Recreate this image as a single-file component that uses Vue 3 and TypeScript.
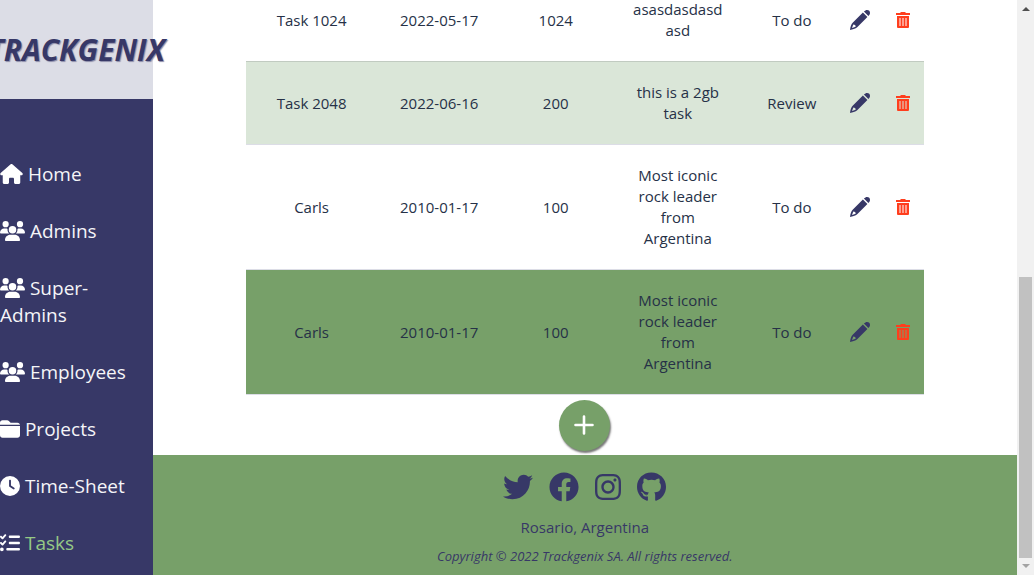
<script setup lang="ts">
interface NavItem {
  label: string
  icon: string
  active?: boolean
}

interface Task {
  name: string
  date: string
  hours: number
  description: string
  status: string
  tone: string
}

interface Glyph {
  box: string
  width: number
  path: string
}

const glyphs: Record<string, Glyph> = {
  house: {
    box: '0 0 576 512',
    width: 23,
    path: 'M575.8 255.5c0 18-15 32.1-32 32.1h-32l.7 160.2c0 2.7-.2 5.4-.5 8.1V472c0 22.1-17.9 40-40 40H392c-22.1 0-40-17.9-40-40v-88c0-17.7-14.3-32-32-32h-64c-17.7 0-32 14.3-32 32v88c0 22.1-17.9 40-40 40h-80c-22.1 0-40-17.9-40-40V287.6H32c-18 0-32-14-32-32.1 0-9 3-17 10-24L266.4 8c7-7 15-8 22-8s15 2 21 7l255.5 224.5c8 7 12 15 11 24z',
  },
  users: {
    box: '0 0 640 512',
    width: 25,
    path: 'M144 0a80 80 0 1 1 0 160A80 80 0 1 1 144 0zM512 0a80 80 0 1 1 0 160A80 80 0 1 1 512 0zM0 298.7C0 239.8 47.8 192 106.7 192h42.7c15.9 0 31 3.5 44.6 9.7-1.3 7.2-1.9 14.7-1.9 22.3 0 38.2 16.8 72.5 43.3 96H21.3C9.6 320 0 310.4 0 298.7zM405.3 320c26-23.5 42.6-57.8 42.6-96 0-7.6-.7-15-1.9-22.3 13.6-6.3 28.7-9.7 44.6-9.7h42.7C592.2 192 640 239.8 640 298.7c0 11.8-9.6 21.3-21.3 21.3H405.3zM224 224a96 96 0 1 1 192 0 96 96 0 1 1-192 0zM128 485.3C128 411.7 187.7 352 261.3 352h117.4C452.3 352 512 411.7 512 485.3c0 14.7-11.9 26.7-26.7 26.7H154.7c-14.7 0-26.7-11.9-26.7-26.7z',
  },
  folder: {
    box: '0 0 512 512',
    width: 20,
    path: 'M0 128V96c0-35.3 28.7-64 64-64h117.5c17 0 33.3 6.7 45.3 18.7L272 96h176c35.3 0 64 28.7 64 64v-16H0zM0 176h512v240c0 35.3-28.7 64-64 64H64c-35.3 0-64-28.7-64-64z',
  },
  clock: {
    box: '0 0 512 512',
    width: 20,
    path: 'M256 0a256 256 0 1 1 0 512A256 256 0 1 1 256 0zM232 120v136c0 8 4 15.5 10.7 20l96 64c11 7.4 25.9 4.4 33.3-6.7s4.4-25.9-6.7-33.3L280 243.2V120c0-13.3-10.7-24-24-24s-24 10.7-24 24z',
  },
  tasks: {
    box: '0 0 512 512',
    width: 20,
    path: 'M152.1 38.2c9.9 8.9 10.7 24 1.8 33.9l-72 80c-4.4 4.9-10.6 7.8-17.2 7.9s-12.9-2.4-17.6-7L7 113c-9.3-9.4-9.3-24.6 0-34s24.6-9.4 33.9 0L63 101.1l55.1-61.2c8.9-9.9 24-10.7 33.9-1.8zm0 160c9.9 8.9 10.7 24 1.8 33.9l-72 80c-4.4 4.9-10.6 7.8-17.2 7.9s-12.9-2.4-17.6-7L7 273c-9.3-9.4-9.3-24.6 0-34s24.6-9.4 33.9 0L63 261.1l55.1-61.2c8.9-9.9 24-10.7 33.9-1.8zM224 96c0-17.7 14.3-32 32-32h224c17.7 0 32 14.3 32 32s-14.3 32-32 32H256c-17.7 0-32-14.3-32-32zm0 160c0-17.7 14.3-32 32-32h224c17.7 0 32 14.3 32 32s-14.3 32-32 32H256c-17.7 0-32-14.3-32-32zm-64 160c0-17.7 14.3-32 32-32h288c17.7 0 32 14.3 32 32s-14.3 32-32 32H192c-17.7 0-32-14.3-32-32zM48 368a48 48 0 1 1 0 96 48 48 0 1 1 0-96z',
  },
  twitter: {
    box: '0 0 512 512',
    width: 30,
    path: 'M459.37 151.716c.325 4.548.325 9.097.325 13.645 0 138.72-105.583 298.558-298.558 298.558-59.452 0-114.68-17.219-161.137-47.106 8.447.974 16.568 1.299 25.34 1.299 49.055 0 94.213-16.568 130.274-44.832-46.132-.975-84.792-31.188-98.112-72.772 6.498.974 12.995 1.624 19.818 1.624 9.421 0 18.843-1.3 27.614-3.573-48.081-9.747-84.143-51.98-84.143-102.985v-1.299c13.969 7.797 30.214 12.67 47.431 13.319-28.264-18.843-46.781-51.005-46.781-87.391 0-19.492 5.197-37.36 14.294-52.954 51.655 63.675 129.3 105.258 216.365 109.807-1.624-7.797-2.599-15.918-2.599-24.04 0-57.828 46.782-104.934 104.934-104.934 30.213 0 57.502 12.67 76.67 33.137 23.715-4.548 46.456-13.32 66.599-25.34-7.798 24.366-24.366 44.833-46.132 57.827 21.117-2.273 41.584-8.122 60.426-16.243-14.292 20.791-32.161 39.308-52.628 54.253z',
  },
  facebook: {
    box: '0 0 512 512',
    width: 30,
    path: 'M504 256C504 119 393 8 256 8S8 119 8 256c0 123.78 90.69 226.38 209.25 245V327.69h-63V256h63v-54.64c0-62.15 37-96.48 93.67-96.48 27.14 0 55.52 4.84 55.52 4.84v61h-31.28c-30.8 0-40.41 19.12-40.41 38.73V256h68.78l-11 71.69h-57.78V501C413.31 482.38 504 379.78 504 256z',
  },
  instagram: {
    box: '0 0 448 512',
    width: 26,
    path: 'M224.1 141c-63.6 0-114.9 51.3-114.9 114.9s51.3 114.9 114.9 114.9S339 319.5 339 255.9 287.7 141 224.1 141zm0 189.6c-41.1 0-74.7-33.5-74.7-74.7s33.5-74.7 74.7-74.7 74.7 33.5 74.7 74.7-33.6 74.7-74.7 74.7zm146.4-194.3c0 14.9-12 26.8-26.8 26.8-14.9 0-26.8-12-26.8-26.8s12-26.8 26.8-26.8 26.8 12 26.8 26.8zm76.1 27.2c-1.7-35.9-9.9-67.7-36.2-93.9-26.2-26.2-58-34.4-93.9-36.2-37-2.1-147.9-2.1-184.9 0-35.8 1.7-67.6 9.9-93.9 36.1s-34.4 58-36.2 93.9c-2.1 37-2.1 147.9 0 184.9 1.7 35.9 9.9 67.7 36.2 93.9s58 34.4 93.9 36.2c37 2.1 147.9 2.1 184.9 0 35.9-1.7 67.7-9.9 93.9-36.2 26.2-26.2 34.4-58 36.2-93.9 2.1-37 2.1-147.8 0-184.8zM398.8 388c-7.8 19.6-22.9 34.7-42.6 42.6-29.5 11.7-99.5 9-132.1 9s-102.7 2.6-132.1-9c-19.6-7.8-34.7-22.9-42.6-42.6-11.7-29.5-9-99.5-9-132.1s-2.6-102.7 9-132.1c7.8-19.6 22.9-34.7 42.6-42.6 29.5-11.7 99.5-9 132.1-9s102.7-2.6 132.1 9c19.6 7.8 34.7 22.9 42.6 42.6 11.7 29.5 9 99.5 9 132.1s2.7 102.7-9 132.1z',
  },
  github: {
    box: '0 0 496 512',
    width: 29,
    path: 'M165.9 397.4c0 2-2.3 3.6-5.2 3.6-3.3.3-5.6-1.3-5.6-3.6 0-2 2.3-3.6 5.2-3.6 3-.3 5.6 1.3 5.6 3.6zM244.8 8C106.1 8 0 113.3 0 252c0 110.9 69.8 205.8 169.5 239.2 12.8 2.3 17.3-5.6 17.3-12.1 0-6.2-.3-40.4-.3-61.4 0 0-70 15-84.7-29.8 0 0-11.4-29.1-27.8-36.6 0 0-22.9-15.7 1.6-15.4 0 0 24.9 2 38.6 25.8 21.9 38.6 58.6 27.5 72.9 20.9 2.3-16 8.8-27.1 16-33.7-55.9-6.2-112.3-14.3-112.3-110.5 0-27.5 7.6-41.3 23.6-58.9-2.6-6.5-11.1-33.3 2.6-67.9 20.9-6.5 69 27 69 27 20-5.6 41.5-8.5 62.8-8.5s42.8 2.9 62.8 8.5c0 0 48.1-33.6 69-27 13.7 34.7 5.2 61.4 2.6 67.9 16 17.7 25.8 31.5 25.8 58.9 0 96.5-58.9 104.2-114.8 110.5 9.2 7.9 17 22.9 17 46.4 0 33.7-.3 75.4-.3 83.6 0 6.5 4.6 14.4 17.3 12.1C428.2 457.8 496 362.9 496 252 496 113.3 383.5 8 244.8 8z',
  },
}

const navItems: NavItem[] = [
  { label: 'Home', icon: 'house' },
  { label: 'Admins', icon: 'users' },
  { label: 'Super-Admins', icon: 'users' },
  { label: 'Employees', icon: 'users' },
  { label: 'Projects', icon: 'folder' },
  { label: 'Time-Sheet', icon: 'clock' },
  { label: 'Tasks', icon: 'tasks', active: true },
]

const tasks: Task[] = [
  { name: 'Task 1024', date: '2022-05-17', hours: 1024, description: 'asasdasdasdasd', status: 'To do', tone: 'plain' },
  { name: 'Task 2048', date: '2022-06-16', hours: 200, description: 'this is a 2gb task', status: 'Review', tone: 'striped' },
  { name: 'Carls', date: '2010-01-17', hours: 100, description: 'Most iconic rock leader from Argentina', status: 'To do', tone: 'plain' },
  { name: 'Carls', date: '2010-01-17', hours: 100, description: 'Most iconic rock leader from Argentina', status: 'To do', tone: 'hovered' },
]

const socials: string[] = ['twitter', 'facebook', 'instagram', 'github']
</script>

<template>
  <div class="page">
    <div class="viewport">
      <aside class="sidebar">
        <div class="brand"><span class="brand-name">TRACKGENIX</span></div>
        <nav class="nav">
          <a v-for="item in navItems" :key="item.label" href="#" class="nav-link" :class="{ active: item.active }">
            <svg class="nav-icon" :viewBox="glyphs[item.icon].box" :width="glyphs[item.icon].width" height="20" aria-hidden="true">
              <path :d="glyphs[item.icon].path" fill-rule="evenodd" />
            </svg>
            {{ item.label }}
          </a>
        </nav>
      </aside>

      <div class="content">
        <main class="main">
          <table class="tasks">
            <colgroup>
              <col class="c-name" />
              <col class="c-date" />
              <col class="c-hours" />
              <col class="c-desc" />
              <col class="c-status" />
              <col class="c-edit" />
              <col class="c-delete" />
            </colgroup>
            <tbody>
              <tr v-for="(task, i) in tasks" :key="i" :class="task.tone">
                <td>{{ task.name }}</td>
                <td>{{ task.date }}</td>
                <td>{{ task.hours }}</td>
                <td class="description">{{ task.description }}</td>
                <td>{{ task.status }}</td>
                <td class="action">
                  <button type="button" class="icon-button" aria-label="Edit task">
                    <svg viewBox="0 0 20 20" width="20" height="20" class="edit-icon">
                      <path d="M13.9 1.6C15 .5 16 0 17 0a3 3 0 0 1 3 3c0 1-.5 2-1.600 3.100zM12.900 2.600l4.500 4.500L8.200 16.300C6.600 17.900 4.500 19.200 0 20 .4 16.500 1.300 14.200 2.900 12.600zM3.300 14.500 2 17.900l3.700-1.200-.5-1.600z" fill-rule="evenodd" />
                    </svg>
                  </button>
                </td>
                <td class="action">
                  <button type="button" class="icon-button" aria-label="Delete task">
                    <svg viewBox="0 0 14 16" width="14" height="16" class="delete-icon">
                      <path d="M0 1h4l1-1h4l1 1h4v2H0zM1 4h12v11a1 1 0 0 1-1 1H2a1 1 0 0 1-1-1zM3 6v8h8V6z" fill-rule="evenodd" />
                      <path d="M5 6h1v8H5zM8 6h1v8H8z" />
                      <path d="M3 6h8v8H3z" opacity=".5" />
                    </svg>
                  </button>
                </td>
              </tr>
            </tbody>
          </table>
          <button type="button" class="add" aria-label="Add task">
            <svg viewBox="0 0 20 20" width="20" height="20">
              <path d="M10 1.500v17M1.500 10h17" />
            </svg>
          </button>
        </main>

        <footer class="footer">
          <div class="socials">
            <a v-for="name in socials" :key="name" href="#" :aria-label="name">
              <svg :viewBox="glyphs[name].box" :width="glyphs[name].width" height="30">
                <path :d="glyphs[name].path" />
              </svg>
            </a>
          </div>
          <p class="place">Rosario, Argentina</p>
          <p class="copyright">Copyright © 2022 Trackgenix SA. All rights reserved.</p>
        </footer>
      </div>
    </div>

    <div class="scrollbar" aria-hidden="true">
      <span class="arrow up"></span>
      <div class="track"><div class="thumb"></div></div>
      <span class="arrow down"></span>
    </div>
  </div>
</template>

<style>
body {
  margin: 0;
  overflow: hidden;
}
</style>

<style scoped>
.page {
  display: flex;
  height: 100vh;
  overflow: hidden;
  background: #fff;
  color: #263147;
  font-family: "Segoe UI", "Open Sans", "Noto Sans", sans-serif;
  font-size: 15px;
  line-height: 21px;
}

.viewport {
  display: flex;
  flex: 1;
  min-width: 0;
}

.sidebar {
  flex: 0 0 15%;
  min-width: 0;
  background: #373867;
}

.brand {
  display: flex;
  align-items: center;
  justify-content: center;
  height: 99px;
  background: #dcdde6;
}

.brand-name {
  position: relative;
  z-index: 1;
  color: #373867;
  font-size: 30px;
  font-style: italic;
  font-weight: 700;
  line-height: 40px;
  text-shadow: 1px 1px 1px #8b8ba8;
}

.nav {
  display: flex;
  flex-direction: column;
  gap: 30px;
  padding-top: 62px;
}

.nav-link {
  color: #f5f5f8;
  font-size: 19px;
  font-weight: 500;
  line-height: 27px;
  text-decoration: none;
}

.nav-link.active {
  color: #95c985;
}

.nav-icon {
  vertical-align: -3px;
  fill: #fff;
}

.content {
  display: flex;
  flex: 1;
  flex-direction: column;
  justify-content: flex-end;
  min-width: 0;
  height: 100%;
}

.main {
  display: flex;
  flex-direction: column;
  align-items: center;
  flex-shrink: 0;
  gap: 5px;
  padding: 0 93px 4px;
}

.tasks {
  width: 100%;
  table-layout: fixed;
  border-collapse: separate;
  border-spacing: 0;
  text-align: center;
}

.c-name { width: 132px; }
.c-date { width: 123px; }
.c-hours { width: 110px; }
.c-desc { width: 134px; }
.c-status { width: 94px; }
.c-edit { width: 43px; }
.c-delete { width: 42px; }

.tasks td {
  padding: 20px 0;
  border-bottom: 1px solid #dcdde6;
  vertical-align: middle;
}

.tasks td.description {
  padding: 20px;
  overflow-wrap: anywhere;
}

.tasks tr:first-child td {
  border-bottom-color: #c1cbc1;
}

.striped {
  background: #dae6d8;
}

.hovered {
  background: #77a069;
}

.tasks td.action {
  padding: 0;
}

.icon-button {
  display: block;
  margin: 0 auto;
  padding: 0;
  border: 0;
  background: none;
  cursor: pointer;
}

.icon-button svg {
  display: block;
}

.edit-icon {
  fill: #373867;
}

.delete-icon {
  fill: #ff3e1d;
}

.add {
  display: flex;
  align-items: center;
  justify-content: center;
  width: 51px;
  height: 51px;
  padding: 0 2px 2px 0;
  border: 0;
  border-radius: 50%;
  background: #77a069;
  box-shadow: 1px 2px 2px #777;
}

.add path {
  fill: none;
  stroke: #fff;
  stroke-width: 2.6;
  stroke-linecap: round;
}

.footer {
  display: flex;
  flex-direction: column;
  align-items: center;
  flex-shrink: 0;
  box-sizing: border-box;
  padding: 17px 0 8px;
  background: #77a069;
  color: #373867;
}

.socials {
  display: flex;
  gap: 16px;
}

.socials svg {
  display: block;
  fill: #373867;
}

.place {
  margin: 15px 0 0;
}

.copyright {
  margin: 8px 0 0;
  font-size: 13px;
  font-style: italic;
}

.scrollbar {
  display: flex;
  flex: 0 0 17px;
  flex-direction: column;
  align-items: center;
  justify-content: space-between;
  box-sizing: border-box;
  padding: 7px 0;
  background: #f1f1f1;
}

.track {
  display: flex;
  flex: 1;
  flex-direction: column;
  justify-content: flex-end;
  padding: 6px 0;
}

.thumb {
  width: 13px;
  height: 52%;
  background: #c1c1c1;
}

.arrow {
  border: 4px solid transparent;
}

.arrow.up {
  border-top-width: 0;
  border-bottom-color: #505050;
}

.arrow.down {
  border-bottom-width: 0;
  border-top-color: #a3a3a3;
}
</style>
